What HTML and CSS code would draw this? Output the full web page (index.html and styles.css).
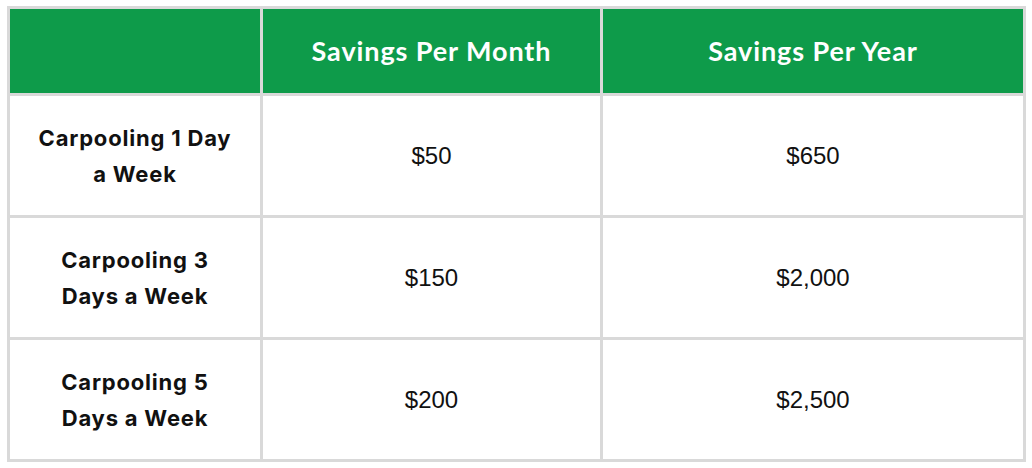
FILE: index.html
```html
<!DOCTYPE html>
<html lang="en">
<head>
<meta charset="utf-8">
<title>Carpooling Savings</title>
<link rel="stylesheet" href="styles.css">
</head>
<body>
<table class="savings">
  <colgroup>
    <col class="c1">
    <col class="c2">
    <col class="c3">
  </colgroup>
  <thead>
    <tr class="head-row">
      <th></th>
      <th>Savings Per Month</th>
      <th>Savings Per Year</th>
    </tr>
  </thead>
  <tbody>
    <tr>
      <th class="label"><span class="label-text">Carpooling 1 Day<br>a Week</span></th>
      <td>$50</td>
      <td>$650</td>
    </tr>
    <tr>
      <th class="label"><span class="label-text">Carpooling 3<br>Days a Week</span></th>
      <td>$150</td>
      <td>$2,000</td>
    </tr>
    <tr>
      <th class="label"><span class="label-text">Carpooling 5<br>Days a Week</span></th>
      <td>$200</td>
      <td>$2,500</td>
    </tr>
  </tbody>
</table>
</body>
</html>
```

FILE: styles.css
```css
html, body {
  margin: 0;
  padding: 0;
  background: #ffffff;
}

body {
  padding: 6px 0 0 7px;
}

.savings {
  border-collapse: collapse;
  table-layout: fixed;
  width: 1019px;
}

.c1 { width: 253px; }
.c2 { width: 340px; }
.c3 { width: 423px; }

.savings th,
.savings td {
  border: 3px solid #d9d9d9;
  padding: 0;
  text-align: center;
  vertical-align: middle;
}

.head-row {
  height: 87px;
}

.head-row th {
  background: #0e9b4a;
  color: #ffffff;
  font-family: "Lato", "DejaVu Sans", sans-serif;
  font-weight: 700;
  font-size: 27px;
  letter-spacing: 0.9px;
  padding-bottom: 2px;
}

.savings tbody tr {
  height: 122px;
}

.label {
  font-family: "Inter", "Noto Sans", sans-serif;
  font-weight: 700;
  font-size: 22px;
  letter-spacing: 0.8px;
  line-height: 36px;
  color: #111111;
}

.savings td {
  font-family: "Liberation Sans", Arial, sans-serif;
  font-size: 24px;
  color: #111111;
}
```
